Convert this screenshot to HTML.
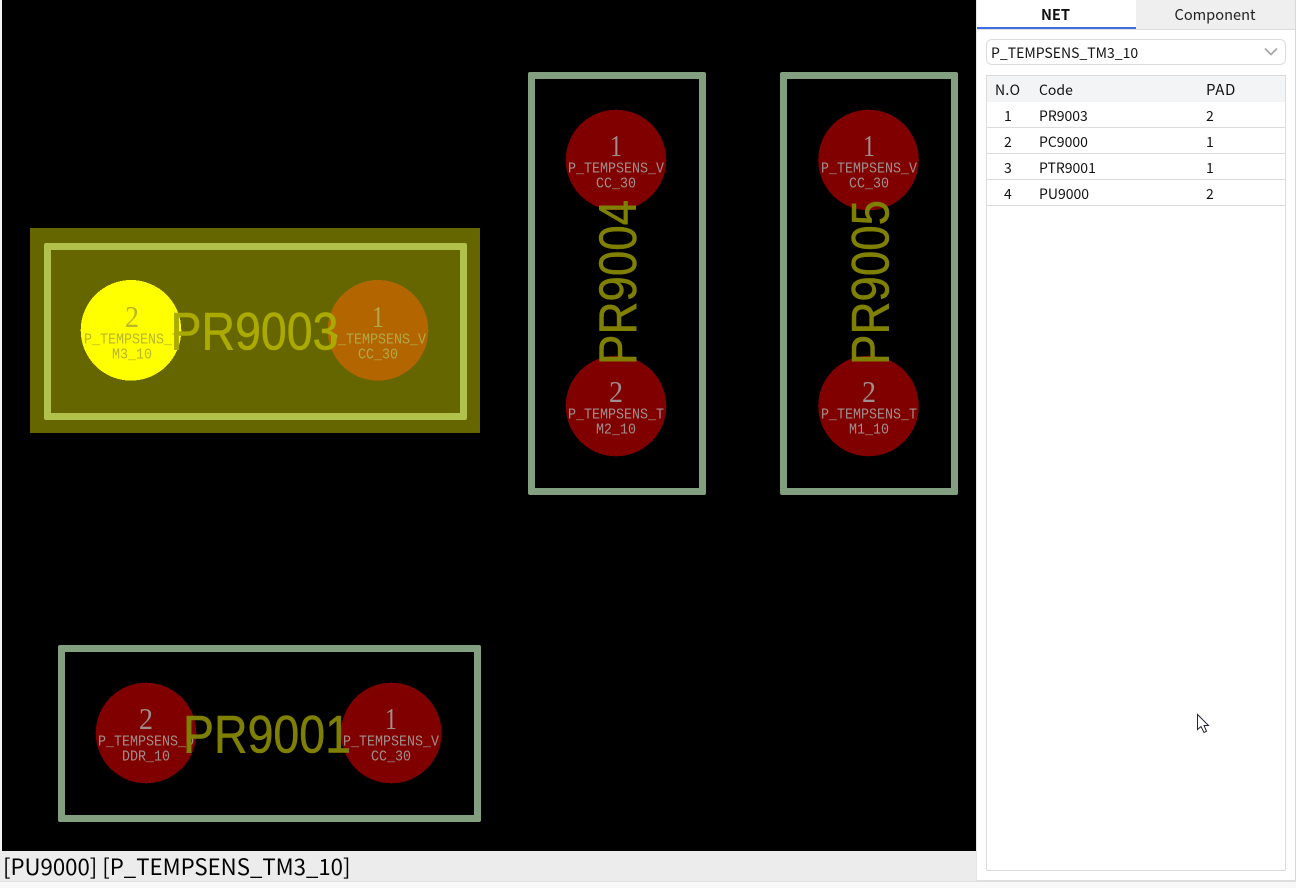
<!DOCTYPE html>
<html><head><meta charset="utf-8"><style>
*{box-sizing:border-box}
html,body{margin:0;padding:0;width:1296px;height:888px;overflow:hidden;background:#f8f8f8;font-family:"Noto Sans CJK SC","Liberation Sans",sans-serif;color:#111}
.a{position:absolute}
svg text{white-space:pre}
.n{font-family:"Liberation Serif",serif;font-size:31px;text-anchor:middle}
.l{font-family:"Liberation Mono",monospace;font-size:14.5px;text-anchor:middle;transform:translateY(.7px)}
.b{font-family:"Liberation Sans",sans-serif;font-size:53px;stroke-width:.5px}
.r{font-size:14px;line-height:26px;height:26px}
.line{left:987px;width:298px;height:1px;background:#dcdcdc}
</style></head><body>
<div class="a" style="left:0;top:0;width:2px;height:851px;background:#f4f4f4"></div>
<svg class="a" style="left:0;top:0" width="976" height="851" viewBox="0 0 976 851">
<rect x="2" y="0" width="974" height="851" fill="#000"/>
<rect x="30" y="228" width="450" height="205" fill="#666600"/>
<rect x="44" y="243" width="423" height="177" rx="2" fill="#b0c24b"/><rect x="51" y="250" width="409" height="163" fill="#666600"/>
<rect x="528" y="72" width="178" height="423" rx="2" fill="#82a07f"/><rect x="535" y="79" width="164" height="409" fill="#000"/>
<rect x="780" y="72" width="178" height="423" rx="2" fill="#82a07f"/><rect x="787" y="79" width="164" height="409" fill="#000"/>
<rect x="58" y="645" width="423" height="177" rx="2" fill="#82a07f"/><rect x="65" y="652" width="409" height="163" fill="#000"/>
<g shape-rendering="crispEdges">
<circle cx="131" cy="330.3" r="50.3" fill="#ffff00"/>
<circle cx="378" cy="330.3" r="50.3" fill="#b36600"/>
<circle cx="616" cy="160" r="50.3" fill="#800000"/>
<circle cx="616" cy="406" r="50.3" fill="#800000"/>
<circle cx="868.5" cy="160" r="50.3" fill="#800000"/>
<circle cx="868.5" cy="406" r="50.3" fill="#800000"/>
<circle cx="146" cy="733" r="50.3" fill="#800000"/>
<circle cx="391.3" cy="733" r="50.3" fill="#800000"/>
</g>
<g fill="#b8b62a">
<text class="n" x="132" y="327" textLength="14" lengthAdjust="spacingAndGlyphs">2</text>
<text class="l" x="132" y="343" textLength="96" lengthAdjust="spacingAndGlyphs">P_TEMPSENS_T</text>
<text class="l" x="132" y="358" textLength="40" lengthAdjust="spacingAndGlyphs">M3_10</text>
</g>
<g fill="#b0a84a">
<text class="n" x="378" y="327" textLength="12" lengthAdjust="spacingAndGlyphs">1</text>
<text class="l" x="378" y="343" textLength="96" lengthAdjust="spacingAndGlyphs">P_TEMPSENS_V</text>
<text class="l" x="378" y="358" textLength="40" lengthAdjust="spacingAndGlyphs">CC_30</text>
</g>
<g fill="#a08e8e">
<text class="n" x="616" y="156" textLength="12" lengthAdjust="spacingAndGlyphs">1</text>
<text class="l" x="616" y="172" textLength="96" lengthAdjust="spacingAndGlyphs">P_TEMPSENS_V</text>
<text class="l" x="616" y="187" textLength="40" lengthAdjust="spacingAndGlyphs">CC_30</text>
<text class="n" x="616" y="402" textLength="14" lengthAdjust="spacingAndGlyphs">2</text>
<text class="l" x="616" y="418" textLength="96" lengthAdjust="spacingAndGlyphs">P_TEMPSENS_T</text>
<text class="l" x="616" y="433" textLength="40" lengthAdjust="spacingAndGlyphs">M2_10</text>
<text class="n" x="869" y="156" textLength="12" lengthAdjust="spacingAndGlyphs">1</text>
<text class="l" x="869" y="172" textLength="96" lengthAdjust="spacingAndGlyphs">P_TEMPSENS_V</text>
<text class="l" x="869" y="187" textLength="40" lengthAdjust="spacingAndGlyphs">CC_30</text>
<text class="n" x="869" y="402" textLength="14" lengthAdjust="spacingAndGlyphs">2</text>
<text class="l" x="869" y="418" textLength="96" lengthAdjust="spacingAndGlyphs">P_TEMPSENS_T</text>
<text class="l" x="869" y="433" textLength="40" lengthAdjust="spacingAndGlyphs">M1_10</text>
<text class="n" x="146" y="729" textLength="14" lengthAdjust="spacingAndGlyphs">2</text>
<text class="l" x="146" y="745" textLength="96" lengthAdjust="spacingAndGlyphs">P_TEMPSENS_D</text>
<text class="l" x="146" y="760" textLength="48" lengthAdjust="spacingAndGlyphs">DDR_10</text>
<text class="n" x="391" y="729" textLength="12" lengthAdjust="spacingAndGlyphs">1</text>
<text class="l" x="391" y="745" textLength="96" lengthAdjust="spacingAndGlyphs">P_TEMPSENS_V</text>
<text class="l" x="391" y="760" textLength="40" lengthAdjust="spacingAndGlyphs">CC_30</text>
</g>
<text class="b" x="170.5" y="349.5" fill="#aaaa00" stroke="#aaaa00" textLength="168" lengthAdjust="spacingAndGlyphs">PR9003</text>
<text class="b" x="183" y="752.5" fill="#808000" stroke="#808000" textLength="168" lengthAdjust="spacingAndGlyphs">PR9001</text>
<text class="b" transform="translate(636 365) rotate(-90)" fill="#808000" stroke="#808000" textLength="165" lengthAdjust="spacingAndGlyphs">PR9004</text>
<text class="b" transform="translate(888.5 365) rotate(-90)" fill="#808000" stroke="#808000" textLength="165" lengthAdjust="spacingAndGlyphs">PR9005</text>
</svg>
<div class="a" style="left:0;top:851px;width:976px;height:30px;background:#ececec;font-size:22.2px;line-height:30px;padding-left:3px;white-space:nowrap;color:#000">[PU9000] [P_TEMPSENS_TM3_10]</div>
<div class="a" style="left:0;top:881px;width:976px;height:1px;background:#e2e2e2"></div>

<div class="a" style="left:976px;top:0;width:320px;height:882px;background:#fff;border-left:1px solid #e4e4e4;border-right:1px solid #d8d8d8;border-bottom:2px solid #dedede"></div>
<div class="a" style="left:1136px;top:0;width:159px;height:29px;background:#efefef"></div>
<div class="a" style="left:977px;top:29px;width:318px;height:1px;background:#dddddd"></div>
<div class="a" style="left:977px;top:27px;width:159px;height:2px;background:#3d6fe3"></div>
<div class="a" style="left:977px;top:0;width:157px;height:28px;text-align:center;font-size:14.6px;font-weight:700;line-height:29px">NET</div>
<div class="a" style="left:1136px;top:0;width:158px;height:28px;text-align:center;font-size:14.6px;line-height:29px;color:#222">Component</div>

<div class="a" style="left:986px;top:39px;width:300px;height:26px;border:1px solid #dcdcdc;border-radius:6px;background:#fff;font-size:14px;line-height:27px;padding-left:4px">P_TEMPSENS_TM3_10</div>
<svg class="a" style="left:1263px;top:46px" width="16" height="12" viewBox="0 0 16 12"><path d="M2 2.5 L8 8.5 L14 2.5" fill="none" stroke="#a8a8a8" stroke-width="1.8"/></svg>

<div class="a" style="left:986px;top:75px;width:300px;height:796px;border:1px solid #dcdcdc;background:#fff"></div>
<div class="a" style="left:987px;top:76px;width:298px;height:26px;background:#f3f4f6"></div>
<div class="a r" style="left:995px;top:77px;letter-spacing:.3px">N.O</div>
<div class="a r" style="left:1039px;top:77px">Code</div>
<div class="a r" style="left:1206px;top:77px;font-size:15px;letter-spacing:.6px">PAD</div>

<div class="a r" style="left:1004px;top:103px">1</div><div class="a r" style="left:1039px;top:103px">PR9003</div><div class="a r" style="left:1206px;top:103px">2</div>
<div class="a line" style="top:127px"></div>
<div class="a r" style="left:1004px;top:129px">2</div><div class="a r" style="left:1039px;top:129px">PC9000</div><div class="a r" style="left:1206px;top:129px">1</div>
<div class="a line" style="top:153px"></div>
<div class="a r" style="left:1004px;top:155px">3</div><div class="a r" style="left:1039px;top:155px">PTR9001</div><div class="a r" style="left:1206px;top:155px">1</div>
<div class="a line" style="top:179px"></div>
<div class="a r" style="left:1004px;top:181px">4</div><div class="a r" style="left:1039px;top:181px">PU9000</div><div class="a r" style="left:1206px;top:181px">2</div>
<div class="a line" style="top:205px"></div>

<svg class="a" style="left:1196px;top:713px" width="16" height="22" viewBox="0 0 16 22"><path d="M1.5 1.5 V16.5 L5 13.5 L8 19.5 L10.5 18.3 L8 12.5 L12.5 12.5 Z" fill="#fff" stroke="#222236" stroke-width="1"/></svg>
</body></html>
